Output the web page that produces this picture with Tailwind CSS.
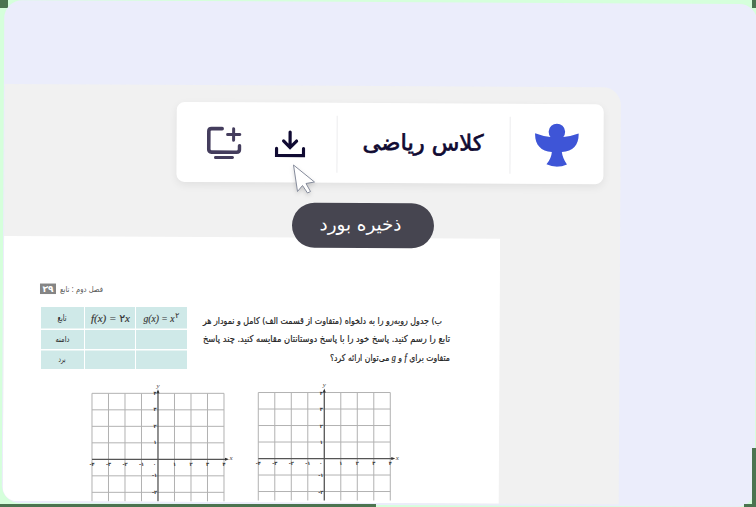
<!DOCTYPE html>
<html lang="fa">
<head>
<meta charset="utf-8">
<title>کلاس ریاضی</title>
<script src="https://cdn.jsdelivr.net/npm/@tailwindcss/browser@4"></script>
</head>
<body class="relative h-[507px] w-[756px] overflow-hidden bg-[#d5ffdb] font-['DejaVu_Sans',sans-serif]">
<!-- Selection frame corners -->
<div class="absolute left-0 top-0 h-2 w-2 bg-[#4b7450]"></div>
<div class="absolute right-0 top-0 h-2 w-1 bg-[#4b7450]"></div>

<main class="relative ml-[3px] mt-[2px] flex h-[503px] w-[753px] rotate-[.3deg] flex-col rounded-[18px] bg-[#ebedfb] pl-px pt-[84px]">
  <section class="flex h-[417px] w-[616px] flex-col overflow-hidden rounded-tr-[18px] rounded-bl-[14px] bg-[#f1f1f1] pt-[17px]">
    <header class="ml-[172px] flex h-[80px] w-[427px] shrink-0 items-center rounded-[8px] bg-white pl-[30px] shadow-[0_3px_8px_rgba(0,0,0,0.07)]">
      <svg class="mt-[2px] h-[34px] w-[35px]" viewBox="0 0 35 34" fill="none" stroke="#443d5d" stroke-width="3.6" stroke-linecap="round" stroke-linejoin="round">
        <path d="M15.500 2.500H5Q2.200 2.500 2.200 5V23Q2.200 26 5 26H30Q33 26 33 23V19.500"/>
        <path d="M27 2.500V14M21 8.200H33.300M9 31.300H26" stroke-width="3"/>
      </svg>
      <svg class="ml-[33px] mt-[3px] h-[30px] w-[31px]" viewBox="0 0 31 30" fill="none" stroke="#100a32" stroke-width="3.200" stroke-linecap="round" stroke-linejoin="miter">
        <path d="M15.500 2.500V17M9 11.500L15.500 18L22 11.500"/><path d="M2 19V26H29V19" stroke-width="3.200"/>
      </svg>
      <div class="ml-[31px] mt-[2px] h-[57px] w-px bg-[#ececee]"></div>
      <svg class="ml-[24px] mt-[2px] h-[40px] w-[124px]" viewBox="0 0 124 40">
        <text x="61.500" y="26" text-anchor="middle" direction="rtl" textLength="121" lengthAdjust="spacingAndGlyphs" font-size="22" fill="#100a32" stroke="#100a32" stroke-width=".7">کلاس ریاضی</text>
      </svg>
      <div class="ml-[24px] mt-[2px] h-[57px] w-px bg-[#ececee]"></div>
      <svg class="ml-[24px] mt-[2px] h-[44px] w-[45px]" viewBox="0 0 45 44" fill="#3e55d7">
        <path d="M15.800 14A8.200 8.200 0 1 1 28.700 14Q36 13.500 44 10.500C44.500 21 39 28.500 27.300 29Q28 35 32.500 41.500Q22.300 46 12 41.500Q17 35 17.300 29C6 28.500 0 21 .5 10.500Q8 13.500 15.800 14Z"/>
      </svg>
    </header>

    <article class="mt-[55px] h-[265px] w-[496px] shrink-0 bg-white">
      <svg class="block h-[265px] w-[496px] rotate-[-.3deg]" viewBox="3.400 237.300 496 265">
        <defs>
          <g id="grid">
            <path d="M-66 -66V42M-49.500 -66V42M-33 -66V42M-16.500 -66V42M16.500 -66V42M33 -66V42M49.500 -66V42M66 -66V42M-66 -66H66M-66 -49.500H66M-66 -33H66M-66 -16.500H66M-66 16.500H66M-66 33H66" stroke="#b2b2b2" stroke-width="1" fill="none"/>
            <path d="M0 -68V42M-66 0H69" stroke="#555" stroke-width="1.300" fill="none"/>
            <path d="M-1.500 -66L0 -70L1.500 -66ZM67 -1.500L71 0L67 1.500Z" fill="#333"/>
            <g font-size="5" fill="#333" text-anchor="middle" font-weight="bold">
              <text x="-3" y="-64">۴</text><text x="-3" y="-48">۳</text><text x="-3" y="-31">۲</text><text x="-3" y="-15">۱</text>
              <text x="-3.500" y="18">-۱</text><text x="-3.500" y="35">-۲</text>
              <text x="-66" y="6.500">-۴</text><text x="-49.500" y="6.500">-۳</text><text x="-33" y="6.500">-۲</text><text x="-16.500" y="6.500">-۱</text><text x="-3.500" y="6.500">۰</text>
              <text x="16.500" y="6.500">۱</text><text x="33" y="6.500">۲</text><text x="49.500" y="6.500">۳</text><text x="66" y="6.500">۴</text>
            </g>
            <g font-size="7" fill="#444" font-family="'Liberation Serif',serif" font-style="italic" text-anchor="middle">
              <text x="0" y="-71.500">y</text><text x="73" y="1">x</text>
            </g>
          </g>
        </defs>

        <rect x="40" y="283.500" width="16" height="10.500" fill="#858585"/>
        <text x="48" y="292" text-anchor="middle" font-size="8.500" font-weight="bold" fill="#fff" textLength="11" lengthAdjust="spacingAndGlyphs">۳۹</text>
        <text x="81.500" y="291.500" text-anchor="middle" direction="rtl" font-size="8" fill="#555" textLength="43" lengthAdjust="spacingAndGlyphs">فصل دوم : تابع</text>

        <path d="M41 307H84V328.500H41ZM85 307H135V328.500H85ZM136 307H187V328.500H136ZM41 330H84V349H41ZM85 330H135V349H85ZM136 330H187V349H136ZM41 350.500H84V369H41ZM85 350.500H135V369H85ZM136 350.500H187V369H136Z" fill="#cfe9e8"/>
        <g font-size="9" fill="#222" text-anchor="middle" direction="rtl">
          <text x="62" y="321" textLength="9" lengthAdjust="spacingAndGlyphs">تابع</text>
          <text x="62.500" y="342" font-size="8" textLength="14" lengthAdjust="spacingAndGlyphs">دامنه</text>
          <text x="62" y="362" font-size="8" textLength="7" lengthAdjust="spacingAndGlyphs">برد</text>
        </g>
        <g font-family="'Liberation Serif','DejaVu Sans',serif" font-style="italic" font-size="11" fill="#333" stroke="#333" stroke-width=".15">
          <text x="91" y="322" textLength="39" lengthAdjust="spacingAndGlyphs">f(x) = <tspan font-size="11" font-style="normal">۲</tspan>x</text>
          <text x="143.500" y="322" textLength="31" lengthAdjust="spacingAndGlyphs">g(x) = x</text>
          <text x="175.300" y="317.500" font-size="7.500" font-style="normal">۲</text>
        </g>

        <g font-size="9.500" fill="#222" stroke="#222" stroke-width=".2" direction="rtl">
          <text x="442" y="324" textLength="239" lengthAdjust="spacingAndGlyphs">ب) جدول روبه‌رو را به دلخواه (متفاوت از قسمت الف) کامل و نمودار هر</text>
          <text x="450" y="342" textLength="247" lengthAdjust="spacingAndGlyphs">تابع را رسم کنید. پاسخ خود را با پاسخ دوستانتان مقایسه کنید. چند پاسخ</text>
          <text x="450" y="360.500" textLength="120" lengthAdjust="spacingAndGlyphs">متفاوت برای <tspan font-family="'Liberation Serif',serif" font-style="italic" font-size="10">f</tspan> و <tspan font-family="'Liberation Serif',serif" font-style="italic" font-size="10">g</tspan> می‌توان ارائه کرد؟</text>
        </g>

        <use href="#grid" x="158" y="459.300"/>
        <use href="#grid" x="324.300" y="458.500"/>
      </svg>
    </article>
  </section>
</main>

<!-- Tooltip -->
<div class="absolute left-[292px] top-[203px] flex h-[45px] w-[142px] rotate-[.2deg] items-center justify-center rounded-full bg-[#464550]">
  <svg class="h-[45px] w-[142px]" viewBox="0 0 142 45">
    <text x="68.500" y="27.500" text-anchor="middle" direction="rtl" font-size="18" fill="#fff" textLength="82" lengthAdjust="spacingAndGlyphs">ذخیره بورد</text>
  </svg>
</div>

<!-- Mouse pointer -->
<svg class="absolute left-[288px] top-[160px] h-[38px] w-[32px] drop-shadow-[0_2px_2px_rgba(0,0,0,0.15)]" viewBox="288 160 32 38">
  <path d="M293.500 165L297.500 191.500L302.500 185.500L307.500 193L310.500 191.500L306 183.500L314.500 182Z" fill="#fff" stroke="#858b9b" stroke-width="1" stroke-linejoin="round"/>
</svg>

<!-- Progress strips along the frame -->
<div class="absolute left-0 top-[504px] h-[3px] w-[376px] bg-[#4b7450]"></div>
<div class="absolute left-[752px] top-[448px] h-[59px] w-1 bg-[#4b7450]"></div>
<div class="absolute left-[744px] top-[504px] h-[3px] w-3 bg-[#4b7450]"></div>
</body>
</html>
